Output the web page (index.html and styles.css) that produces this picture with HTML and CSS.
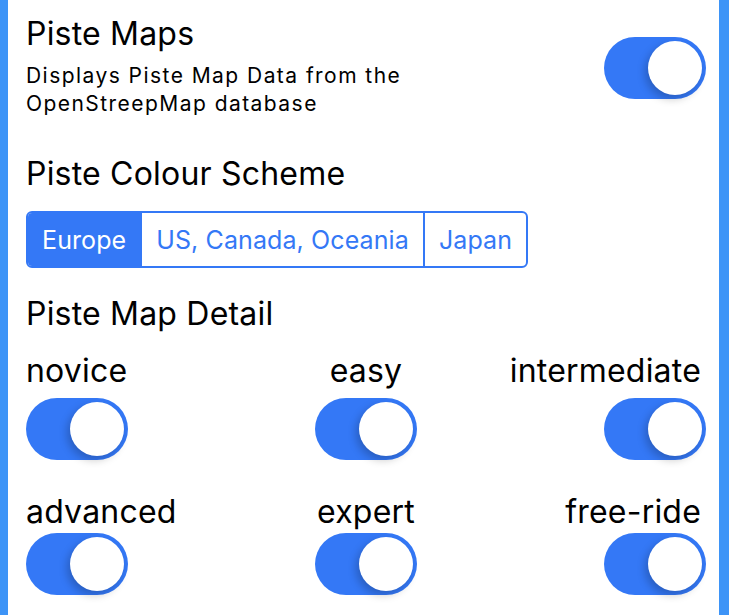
FILE: index.html
```html
<!DOCTYPE html>
<html lang="en">

<head>
  <meta charset="UTF-8">
  <meta name="viewport" content="width=device-width, initial-scale=1.0">
  <title>Piste Settings</title>
  <link rel="stylesheet" href="styles.css">
</head>

<body>
  <!-- settings panel -->
  <div class="panel">
    <div class="row">
      <div class="info">
        <div class="title">Piste Maps</div>
        <div class="desc">Displays Piste Map Data from the<br>OpenStreepMap database</div>
      </div>
      <div class="toggle on"><span class="knob"></span></div>
    </div>

    <div class="heading scheme">Piste Colour Scheme</div>
    <div class="segments">
      <div class="seg active">Europe</div>
      <div class="seg">US, Canada, Oceania</div>
      <div class="seg">Japan</div>
    </div>

    <div class="heading detail">Piste Map Detail</div>
    <div class="grid">
      <div class="cell left">
        <div class="label">novice</div>
        <div class="toggle on"><span class="knob"></span></div>
      </div>
      <div class="cell mid">
        <div class="label">easy</div>
        <div class="toggle on"><span class="knob"></span></div>
      </div>
      <div class="cell right">
        <div class="label">intermediate</div>
        <div class="toggle on"><span class="knob"></span></div>
      </div>
      <div class="cell left">
        <div class="label">advanced</div>
        <div class="toggle on"><span class="knob"></span></div>
      </div>
      <div class="cell mid">
        <div class="label">expert</div>
        <div class="toggle on"><span class="knob"></span></div>
      </div>
      <div class="cell right">
        <div class="label">free-ride</div>
        <div class="toggle on"><span class="knob"></span></div>
      </div>
    </div>
  </div>
</body>

</html>
```

FILE: styles.css
```css
body {
  margin: 0;
  background: #fff;
  font-family: Inter, 'Noto Sans', sans-serif;
  color: #000;
}

.panel {
  height: 615px;
  box-sizing: border-box;
  border-left: 8px solid #3d94f7;
  border-right: 10px solid #3d94f7;
  padding: 15px 13px 0 18px;
}

.row {
  display: flex;
  align-items: flex-start;
  justify-content: space-between;
}

.row .toggle {
  margin-top: 22px;
}

.title,
.heading,
.label {
  font-size: 32px;
  line-height: 38px;
  letter-spacing: 0.2px;
}

.desc {
  font-size: 21px;
  line-height: 27.5px;
  letter-spacing: 1.45px;
  margin-top: 9px;
}

.heading.scheme {
  margin-top: 38px;
}

.heading.detail {
  margin-top: 27px;
}

.segments {
  display: inline-flex;
  margin-top: 18px;
  border: 2px solid #3478f6;
  border-radius: 6px;
  overflow: hidden;
  height: 53px;
}

.seg {
  display: flex;
  align-items: center;
  padding: 0 14px;
  font-size: 25px;
  letter-spacing: 0.1px;
  color: #3478f6;
  border-left: 2px solid #3478f6;
}

.seg:first-child {
  border-left: none;
}

.seg.active {
  background: #3478f6;
  color: #fff;
}

.grid {
  display: grid;
  grid-template-columns: 1fr 1fr 1fr;
  row-gap: 33px;
  margin-top: 19px;
}

.cell {
  display: flex;
  flex-direction: column;
  gap: 8px;
}

.cell:nth-child(n+4) {
  gap: 2px;
}

.cell.left {
  align-items: flex-start;
}

.cell.mid {
  align-items: center;
}

.cell.right {
  align-items: flex-end;
}

.cell.right .label {
  margin-right: 5px;
}

.toggle {
  width: 102px;
  height: 62px;
  border-radius: 31px;
  background: #3478f6;
  position: relative;
  flex-shrink: 0;
}

.toggle .knob {
  position: absolute;
  top: 4px;
  right: 4px;
  width: 54px;
  height: 54px;
  border-radius: 50%;
  background: #fff;
  box-shadow: -3px 4px 8px rgba(0, 0, 0, 0.22);
}
```
